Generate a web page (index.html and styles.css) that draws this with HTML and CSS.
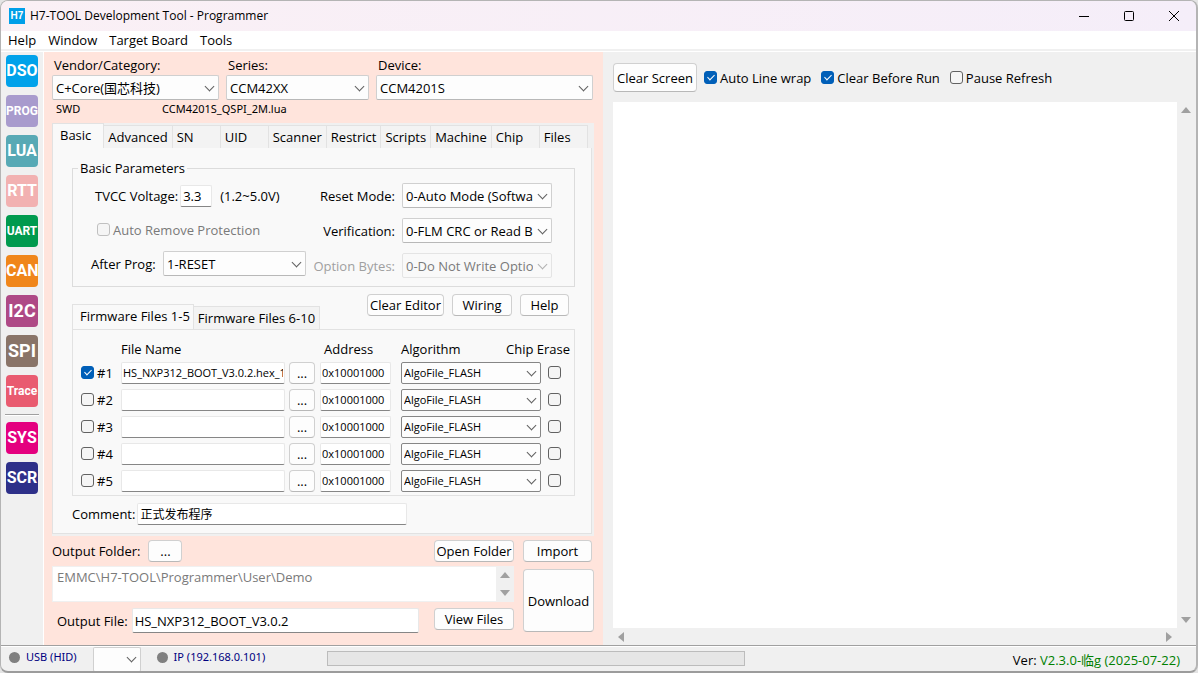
FILE: index.html
```html
<!DOCTYPE html>
<html lang="en">
<head>
    <meta charset="UTF-8">
    <meta name="viewport" content="width=device-width, initial-scale=1.0">
    <title>H7-TOOL Development Tool - Programmer</title>
    <link rel="stylesheet" href="styles.css">
</head>
<body>
    <div class="window">
        <header class="titlebar">
            <span class="app-icon">H7</span>
            <h1>H7-TOOL Development Tool - Programmer</h1>
            <div class="window-buttons">
                <button type="button" aria-label="Minimize"><svg width="12" height="12" viewBox="0 0 12 12"><path d="M1 6.5h10"/></svg></button>
                <button type="button" aria-label="Maximize"><svg width="12" height="12" viewBox="0 0 12 12"><rect x="1.5" y="1.5" width="9" height="9" rx="1"/></svg></button>
                <button type="button" aria-label="Close"><svg width="12" height="12" viewBox="0 0 12 12"><path d="M1 1l10 10M11 1L1 11"/></svg></button>
            </div>
        </header>

        <nav class="menubar">
            <a href="#">Help</a>
            <a href="#">Window</a>
            <a href="#">Target Board</a>
            <a href="#">Tools</a>
        </nav>

        <div class="workspace">
            <aside class="toolbar">
                <button type="button" class="tool dso">DSO</button>
                <button type="button" class="tool small prog">PROG</button>
                <button type="button" class="tool lua">LUA</button>
                <button type="button" class="tool rtt">RTT</button>
                <button type="button" class="tool small uart">UART</button>
                <button type="button" class="tool can">CAN</button>
                <button type="button" class="tool i2c">I2C</button>
                <button type="button" class="tool spi">SPI</button>
                <button type="button" class="tool small trace">Trace</button>
                <hr>
                <button type="button" class="tool sys">SYS</button>
                <button type="button" class="tool scr">SCR</button>
            </aside>

            <main class="programmer">
                <section class="device">
                    <div class="device-field">
                        <label for="vendor">Vendor/Category:</label>
                        <span class="select"><select id="vendor"><option>C+Core(国芯科技)</option></select></span>
                        <span class="note">SWD</span>
                    </div>
                    <div class="device-field">
                        <label for="series">Series:</label>
                        <span class="select"><select id="series"><option>CCM42XX</option></select></span>
                        <span class="note lua-file">CCM4201S_QSPI_2M.lua</span>
                    </div>
                    <div class="device-field">
                        <label for="device">Device:</label>
                        <span class="select"><select id="device"><option>CCM4201S</option></select></span>
                    </div>
                </section>

                <section class="tabs">
                    <div class="tab-strip main-strip" role="tablist">
                        <button type="button" class="tab active" role="tab">Basic</button>
                        <button type="button" class="tab" role="tab">Advanced</button>
                        <button type="button" class="tab" role="tab">SN</button>
                        <button type="button" class="tab" role="tab">UID</button>
                        <button type="button" class="tab" role="tab">Scanner</button>
                        <button type="button" class="tab" role="tab">Restrict</button>
                        <button type="button" class="tab" role="tab">Scripts</button>
                        <button type="button" class="tab" role="tab">Machine</button>
                        <button type="button" class="tab" role="tab">Chip</button>
                        <button type="button" class="tab" role="tab">Files</button>
                    </div>

                    <div class="tab-page">
                        <fieldset class="params">
                            <legend>Basic Parameters</legend>
                            <div class="param-left">
                                <div class="param">
                                    <label for="tvcc">TVCC Voltage:</label>
                                    <input type="text" id="tvcc" class="text voltage" value="3.3">
                                    <span class="range">(1.2~5.0V)</span>
                                </div>
                                <div class="param">
                                    <label class="check disabled"><input type="checkbox" disabled>Auto Remove Protection</label>
                                </div>
                                <div class="param after">
                                    <label for="after">After Prog:</label>
                                    <span class="select"><select id="after"><option>1-RESET</option></select></span>
                                </div>
                            </div>
                            <div class="param-right">
                                <label for="reset">Reset Mode:</label>
                                <span class="select"><select id="reset"><option>0-Auto Mode (Software)</option></select></span>
                                <label for="verify">Verification:</label>
                                <span class="select"><select id="verify"><option>0-FLM CRC or Read Back</option></select></span>
                                <label for="option" class="disabled">Option Bytes:</label>
                                <span class="select"><select id="option" disabled><option>0-Do Not Write Option Bytes</option></select></span>
                            </div>
                        </fieldset>

                        <div class="firmware-head">
                            <div class="tab-strip" role="tablist">
                                <button type="button" class="tab active" role="tab">Firmware Files 1-5</button>
                                <button type="button" class="tab" role="tab">Firmware Files 6-10</button>
                            </div>
                            <div class="actions">
                                <button type="button" class="btn">Clear Editor</button>
                                <button type="button" class="btn wide">Wiring</button>
                                <button type="button" class="btn">Help</button>
                            </div>
                        </div>

                        <div class="firmware">
                            <table>
                                <colgroup>
                                    <col class="c-num"><col class="c-file"><col class="c-browse"><col class="c-addr"><col class="c-algo"><col class="c-algo-end"><col class="c-erase">
                                </colgroup>
                                <thead>
                                    <tr>
                                        <th></th>
                                        <th>File Name</th>
                                        <th></th>
                                        <th class="addr">Address</th>
                                        <th>Algorithm</th>
                                        <th colspan="2">Chip Erase</th>
                                    </tr>
                                </thead>
                                <tbody>
                                    <tr>
                                        <td><label class="check"><input type="checkbox" checked>#1</label></td>
                                        <td><input type="text" class="text" aria-label="File 1" value="HS_NXP312_BOOT_V3.0.2.hex_1"></td>
                                        <td><button type="button" class="btn browse">...</button></td>
                                        <td><input type="text" class="text" aria-label="Address 1" value="0x10001000"></td>
                                        <td colspan="2"><span class="select"><select aria-label="Algorithm 1"><option>AlgoFile_FLASH</option></select></span></td>
                                        <td class="erase"><input type="checkbox" aria-label="Chip erase 1"></td>
                                    </tr>
                                    <tr>
                                        <td><label class="check"><input type="checkbox">#2</label></td>
                                        <td><input type="text" class="text" aria-label="File 2"></td>
                                        <td><button type="button" class="btn browse">...</button></td>
                                        <td><input type="text" class="text" aria-label="Address 2" value="0x10001000"></td>
                                        <td colspan="2"><span class="select"><select aria-label="Algorithm 2"><option>AlgoFile_FLASH</option></select></span></td>
                                        <td class="erase"><input type="checkbox" aria-label="Chip erase 2"></td>
                                    </tr>
                                    <tr>
                                        <td><label class="check"><input type="checkbox">#3</label></td>
                                        <td><input type="text" class="text" aria-label="File 3"></td>
                                        <td><button type="button" class="btn browse">...</button></td>
                                        <td><input type="text" class="text" aria-label="Address 3" value="0x10001000"></td>
                                        <td colspan="2"><span class="select"><select aria-label="Algorithm 3"><option>AlgoFile_FLASH</option></select></span></td>
                                        <td class="erase"><input type="checkbox" aria-label="Chip erase 3"></td>
                                    </tr>
                                    <tr>
                                        <td><label class="check"><input type="checkbox">#4</label></td>
                                        <td><input type="text" class="text" aria-label="File 4"></td>
                                        <td><button type="button" class="btn browse">...</button></td>
                                        <td><input type="text" class="text" aria-label="Address 4" value="0x10001000"></td>
                                        <td colspan="2"><span class="select"><select aria-label="Algorithm 4"><option>AlgoFile_FLASH</option></select></span></td>
                                        <td class="erase"><input type="checkbox" aria-label="Chip erase 4"></td>
                                    </tr>
                                    <tr>
                                        <td><label class="check"><input type="checkbox">#5</label></td>
                                        <td><input type="text" class="text" aria-label="File 5"></td>
                                        <td><button type="button" class="btn browse">...</button></td>
                                        <td><input type="text" class="text" aria-label="Address 5" value="0x10001000"></td>
                                        <td colspan="2"><span class="select"><select aria-label="Algorithm 5"><option>AlgoFile_FLASH</option></select></span></td>
                                        <td class="erase"><input type="checkbox" aria-label="Chip erase 5"></td>
                                    </tr>
                                </tbody>
                            </table>
                        </div>

                        <div class="comment">
                            <label for="comment">Comment:</label>
                            <input type="text" id="comment" class="text" value="正式发布程序">
                        </div>
                    </div>
                </section>

                <section class="output">
                    <div class="output-row">
                        <label for="folder">Output Folder:</label>
                        <button type="button" class="btn browse folder-browse">...</button>
                        <button type="button" class="btn side">Open Folder</button>
                    </div>
                    <button type="button" class="btn import">Import</button>
                    <div class="folder">
                        <textarea id="folder" disabled>EMMC\H7-TOOL\Programmer\User\Demo</textarea>
                        <div class="scroll vertical"><i class="arrow up"></i><i class="arrow down"></i></div>
                    </div>
                    <button type="button" class="btn download">Download</button>
                    <div class="output-row file-row">
                        <label for="outfile">Output File:</label>
                        <input type="text" id="outfile" class="text" value="HS_NXP312_BOOT_V3.0.2">
                        <button type="button" class="btn side">View Files</button>
                    </div>
                </section>
            </main>

            <section class="console">
                <div class="console-bar">
                    <button type="button" class="btn clear">Clear Screen</button>
                    <label class="check"><input type="checkbox" checked>Auto Line wrap</label>
                    <label class="check"><input type="checkbox" checked>Clear Before Run</label>
                    <label class="check"><input type="checkbox">Pause Refresh</label>
                </div>
                <div class="log">
                    <textarea aria-label="Log"></textarea>
                    <div class="scroll vertical"><i class="arrow up"></i><i class="arrow down"></i></div>
                    <div class="scroll horizontal"><i class="arrow left"></i><i class="arrow right"></i></div>
                </div>
            </section>
        </div>

        <footer class="statusbar">
            <span class="link-state">USB (HID)</span>
            <span class="select port"><select aria-label="Port"><option></option></select></span>
            <span class="link-state">IP (192.168.0.101)</span>
            <div class="progress"></div>
            <p class="version">Ver: <span>V2.3.0-临g (2025-07-22)</span></p>
        </footer>
    </div>
</body>
</html>
```
FILE: styles.css
```css
:root {
    --face: #f0f0f0;
    --peach: #ffe4dc;
    --page: #f9f9f9;
    --line: #dcdcdc;
    --control-line: #d0d0d0;
    --underline: #868686;
    --accent: #005fb8;
    --arrow: #a0a0a0;
}

* {
    margin: 0;
    padding: 0;
    box-sizing: border-box;
}

body {
    font-family: "Open Sans", "Noto Sans CJK SC", sans-serif;
    font-size: 13px;
    line-height: 18px;
    color: #000;
    background: #e4e4e4;
}

button,
input,
select,
textarea {
    font: inherit;
    color: inherit;
}

.window {
    display: flex;
    flex-direction: column;
    min-height: 100vh;
    border: 1px solid #b4b4b4;
    border-right-width: 2px;
    border-bottom: 2px solid #9c9c9c;
    border-radius: 8px;
    background: var(--face);
    overflow: hidden;
}

/* Title bar and menu */
.titlebar {
    display: flex;
    align-items: center;
    height: 30px;
    padding-left: 8px;
    background: linear-gradient(90deg, #faf0f5, #f5eef9);
}

.app-icon {
    width: 16px;
    height: 16px;
    margin-right: 5px;
    background: #009fe8;
    color: #fff;
    font: bold 10px/16px "Liberation Sans", sans-serif;
    text-align: center;
}

h1 {
    font-size: 12px;
    font-weight: 400;
}

.window-buttons {
    display: flex;
    margin-left: auto;
}

.window-buttons button {
    display: flex;
    align-items: center;
    justify-content: center;
    width: 45px;
    height: 30px;
    border: 0;
    background: none;
}

.window-buttons svg {
    fill: none;
    stroke: #000;
}

.menubar {
    display: flex;
    gap: 12px;
    height: 18px;
    padding-left: 7px;
    background: #fff;
}

.menubar a {
    color: #000;
    text-decoration: none;
}

.workspace {
    display: flex;
    flex: 1;
    margin-top: 2px;
    border-top: 1px solid #fff;
    border-bottom: 1px solid #a0a0a0;
}

/* Left tool buttons */
.toolbar {
    display: flex;
    flex-direction: column;
    gap: 8px;
    width: 42px;
    padding: 3px 5px;
}

.tool {
    height: 32px;
    border: 0;
    border-radius: 4px;
    color: #fff;
    font: bold 16px/32px Roboto, "Liberation Sans", sans-serif;
    text-align: center;
    white-space: nowrap;
}

.tool.small {
    font-size: 12px;
}

.tool.i2c,
.tool.spi {
    font-size: 18px;
}

.dso { background: #00a2ea; }
.prog { background: #a89bcd; }
.lua { background: #57a9b5; }
.rtt { background: #f2b1b1; }
.uart { background: #009a4e; }
.can { background: #f0861a; }
.i2c { background: #ae4986; }
.spi { background: #897468; }
.trace { background: #e95b70; }
.sys { background: #e4007f; }
.scr { background: #2e3089; }

.toolbar hr {
    height: 2px;
    margin: -1px -1px -2px;
    border: 0;
    border-top: 1px solid #a0a0a0;
    background: #fff;
}

/* Shared controls */
.select {
    position: relative;
    display: block;
}

.select select {
    display: block;
    width: 100%;
    height: 25px;
    padding: 0 18px 0 3px;
    appearance: none;
    border: 1px solid var(--control-line);
    border-bottom-color: #b8b8b8;
    border-radius: 2px;
    background: #fdfdfd;
    opacity: 1;
}

.select::after {
    content: "";
    position: absolute;
    right: 6px;
    top: calc(50% - 5px);
    width: 6px;
    height: 6px;
    border: solid #606060;
    border-width: 0 1px 1px 0;
    transform: rotate(45deg);
    pointer-events: none;
}

.select select:disabled {
    border-color: #e4e4e4;
    background: #f9f9f9;
    color: #7a7a7a;
}

.select:has(:disabled)::after {
    border-color: #b0b0b0;
}

.text {
    height: 22px;
    width: 100%;
    padding: 0 2px;
    border: 1px solid #e8e8e8;
    border-bottom-color: var(--underline);
    border-radius: 2px;
    background: #fff;
}

.btn {
    height: 22px;
    border: 1px solid var(--control-line);
    border-bottom-color: #b8b8b8;
    border-radius: 4px;
    background: #fdfdfd;
    white-space: nowrap;
}

.check {
    display: flex;
    align-items: center;
    gap: 3px;
    white-space: nowrap;
}

input[type="checkbox"] {
    position: relative;
    flex: none;
    width: 13px;
    height: 13px;
    appearance: none;
    border: 1px solid #626262;
    border-radius: 3px;
    background: #f5f5f5;
}

input[type="checkbox"]:checked {
    border-color: var(--accent);
    background: var(--accent);
}

input[type="checkbox"]:checked::after {
    content: "";
    position: absolute;
    left: 4px;
    top: 1px;
    width: 3px;
    height: 6px;
    border: solid #fff;
    border-width: 0 1px 1px 0;
    transform: rotate(45deg);
}

input[type="checkbox"]:disabled {
    border-color: #c0c0c0;
}

.disabled {
    color: #7a7a7a;
}

/* Programmer panel */
.programmer {
    flex: none;
    display: flex;
    flex-direction: column;
    width: 560px;
    padding: 4px 9px 0 8px;
    border-left: 1px solid #fff;
    background: var(--peach);
}

.device {
    display: grid;
    grid-template-columns: 167px 143px 1fr;
    gap: 7px;
    padding-right: 1px;
}

.device-field {
    display: flex;
    flex-direction: column;
}

.device-field label {
    padding: 0 0 1px 2px;
}

.note {
    padding-left: 4px;
    font-family: "Noto Sans", sans-serif;
    font-size: 11px;
}

.device-field .lua-file {
    margin-left: -68px;
}

.tabs {
    margin-top: 5px;
    border-right: 2px solid var(--face);
    border-bottom: 2px solid var(--face);
}

.tab-strip {
    display: flex;
    align-items: flex-end;
}

.main-strip {
    background: var(--face);
}

.tab {
    min-width: 48px;
    height: 23px;
    padding: 0 4px 1px;
    border: 1px solid #e2e2e2;
    border-width: 1px 1px 0 0;
    background: #f3f3f3;
    text-align: left;
    white-space: nowrap;
}

.tab.active {
    height: 25px;
    padding: 0 12px 3px 7px;
    border-left-width: 1px;
    background: var(--page);
}

.firmware-head .tab.active {
    padding: 0 3px 3px 7px;
}

.tab-page {
    padding: 11px 16px 8px 19px;
    border: 1px solid #e2e2e2;
    border-top: 0;
    background: var(--page);
}

.params {
    display: flex;
    justify-content: space-between;
    padding: 6px 22px 8px 18px;
    border: 1px solid var(--line);
}

.params legend {
    margin-left: -13px;
    padding: 0 2px;
}

.param-left {
    display: flex;
    flex-direction: column;
    gap: 9px;
    width: 215px;
}

.param {
    display: flex;
    align-items: center;
    height: 25px;
    padding-left: 4px;
}

.param.after {
    justify-content: space-between;
    padding-left: 0;
}

.param.after .select {
    width: 143px;
}

.voltage {
    width: 32px;
    margin: 0 8px 0 2px;
}

.param .check {
    padding-left: 2px;
}

.param-right {
    display: grid;
    grid-template-columns: auto 150px;
    align-items: center;
    gap: 10px 7px;
    text-align: right;
}

.param-right .disabled {
    color: #a0a0a0;
}

.firmware-head {
    display: flex;
    align-items: flex-end;
    justify-content: space-between;
    height: 35px;
    margin: 7px 0 0;
}

.actions {
    display: flex;
    align-self: flex-start;
    gap: 8px;
    padding-right: 6px;
}

.actions .btn {
    min-width: 49px;
    padding: 0 2px;
}

.actions .wide {
    min-width: 60px;
}

.firmware {
    padding: 9px 3px 1px 8px;
    border: 1px solid #e2e2e2;
}

table {
    width: 100%;
    table-layout: fixed;
    border-collapse: collapse;
}

.c-num { width: 40px; }
.c-file { width: 168px; }
.c-browse { width: 31px; }
.c-addr { width: 81px; }
.c-algo { width: 105px; }
.c-algo-end { width: 35px; }

th {
    height: 20px;
    font-weight: 400;
    text-align: left;
    white-space: nowrap;
}

th.addr {
    padding-left: 4px;
}

td {
    height: 27px;
    vertical-align: middle;
}

td .text {
    width: calc(100% - 4px);
    padding: 0 1px;
    font-size: 11px;
}

td:nth-child(4) .text {
    width: 71px;
}

td .select select {
    height: 22px;
    padding-left: 2px;
    border-color: var(--underline);
    font-size: 11px;
}

td .browse {
    width: 26px;
}

td.erase {
    padding-left: 7px;
}

td.erase input {
    display: block;
}

.comment {
    display: flex;
    align-items: center;
    gap: 2px;
    margin-top: 7px;
}

.comment .text {
    width: 270px;
    font-size: 12px;
}

/* Output area */
.output {
    display: grid;
    grid-template-columns: 1fr 71px;
    gap: 4px 9px;
    padding: 4px 0 11px;
}

.output-row {
    display: flex;
    align-items: center;
}

.side {
    width: 80px;
    margin-left: auto;
}

.folder-browse {
    width: 34px;
    margin-left: 8px;
}

.import {
    margin-right: 2px;
}

.folder {
    display: flex;
    height: 36px;
    border: 1px solid #f0f0f0;
    background: #fff;
}

textarea {
    flex: 1;
    border: 0;
    background: #fff;
    resize: none;
}

.folder textarea {
    padding: 1px 4px;
    color: #7a7a7a;
    overflow: hidden;
}

.download {
    grid-row: 2 / span 2;
    grid-column: 2;
    height: 63px;
    margin-top: 3px;
}

.file-row {
    align-items: flex-start;
    padding: 2px 0 0 5px;
}

.file-row label {
    padding-top: 4px;
}

.file-row .text {
    width: 287px;
    height: 25px;
    margin-left: 4px;
}

/* Console */
.console {
    flex: 1;
    display: flex;
    flex-direction: column;
    padding: 0 2px 0 10px;
}

.console-bar {
    display: flex;
    align-items: center;
    gap: 10px;
    padding: 11px 0 10px;
}

.console-bar .clear {
    width: 84px;
    height: 29px;
    margin-right: -3px;
}

.log {
    flex: 1;
    display: grid;
    grid-template-columns: 1fr 17px;
    grid-template-rows: 1fr 17px;
}

.scroll {
    display: flex;
    align-items: center;
    justify-content: space-between;
    background: var(--face);
}

.scroll.vertical {
    flex-direction: column;
    width: 17px;
    padding: 5px 0;
}

.scroll.horizontal {
    padding: 0 5px;
}

.arrow {
    border: 5px solid transparent;
}

.arrow.up {
    border-top: 0;
    border-bottom: 6px solid var(--arrow);
}

.arrow.down {
    border-bottom: 0;
    border-top: 6px solid var(--arrow);
}

.arrow.left {
    border-left: 0;
    border-right: 6px solid var(--arrow);
}

.arrow.right {
    border-right: 0;
    border-left: 6px solid var(--arrow);
}

/* Status bar */
.statusbar {
    display: flex;
    height: 25px;
    padding: 0 16px 0 8px;
    border-top: 1px solid #fff;
}

.link-state {
    display: flex;
    align-items: center;
    gap: 6px;
    height: 20px;
    color: #000080;
    font-family: "Noto Sans", sans-serif;
    font-size: 11px;
}

.link-state::before {
    content: "";
    width: 11px;
    height: 11px;
    border-radius: 50%;
    background: #808080;
}

.port {
    width: 48px;
    margin: 0 16px;
}

.progress {
    width: 418px;
    height: 15px;
    margin: 4px 0 0 62px;
    border: 1px solid #bcbcbc;
    background: #e6e6e6;
}

.version {
    margin-left: auto;
    padding-top: 4px;
}

.version span {
    color: #008000;
}
```
